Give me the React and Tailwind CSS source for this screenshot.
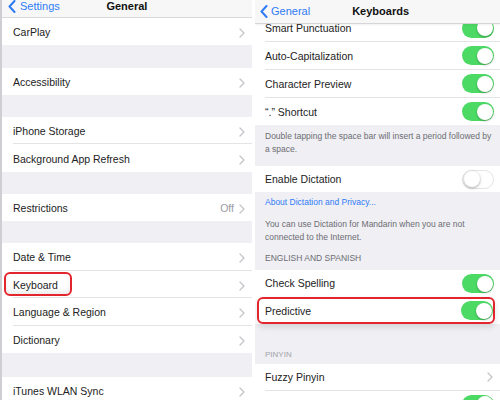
import { useState } from 'react';

const Chevron = () => (
    <svg width="6" height="10" viewBox="0 0 6 10" className="shrink-0">
        <path d="M1 1l4 4-4 4" stroke="#c4c4c9" strokeWidth="1.3" fill="none" strokeLinecap="round" strokeLinejoin="round" />
    </svg>
)

const BackArrow = () => (
    <svg width="8" height="13" viewBox="0 0 8 13" className="shrink-0">
        <path d="M6.5 1L1.5 6.5l5 5.5" stroke="#2f7cf6" strokeWidth="2" fill="none" strokeLinecap="round" strokeLinejoin="round" />
    </svg>
)

const Toggle = ({ on = true }) => (
    on ? (
        <div className="w-[32px] h-[19px] rounded-full bg-[#4cd964] flex items-center justify-end p-[1.5px] shrink-0">
            <div className="w-[16px] h-[16px] rounded-full bg-white shadow-[0_1px_2px_rgba(0,0,0,0.3)]" />
        </div>
    ) : (
        <div className="w-[32px] h-[19px] rounded-full bg-white border border-[#e3e3e8] flex items-center p-[0.5px] shrink-0">
            <div className="w-[16px] h-[16px] rounded-full bg-white shadow-[0_1px_3px_rgba(0,0,0,0.35)]" />
        </div>
    )
)

// left side row (General)
const NavRow = ({ label, value, line = true, h = 'h-[27px]' }) => (
    <div className={`${h} shrink-0 bg-white flex pl-[11px]`}>
        <div className={`flex-1 flex items-center justify-between pt-[3px] pr-[7px] ${line ? 'border-b border-[#e4e4e8]' : ''}`}>
            <span className="text-[10.5px] text-[#222]">{label}</span>
            <div className="flex items-center gap-[5px]">
                {value && <span className="text-[10.5px] text-[#9a9a9f]">{value}</span>}
                <Chevron />
            </div>
        </div>
    </div>
)

const Gap = ({ h }) => <div className={`${h} shrink-0 bg-[#efeff4]`} />

// right side row (Keyboards)
const SwitchRow = ({ label, on = true, line = true, h = 'h-[27px]' }) => (
    <div className={`${h} bg-white flex pl-[10px]`}>
        <div className={`flex-1 flex items-center justify-between pr-[6px] ${line ? 'border-b border-[#e4e4e8]' : ''}`}>
            <span className="text-[10.5px] text-[#222] pt-[2px]">{label}</span>
            <Toggle on={on} />
        </div>
    </div>
)

const GeneralPanel = () => (
    <div className="w-[252px] shrink-0 flex flex-col overflow-hidden border-l-[2px] border-[#cfcfd3] bg-[#efeff4]">
        <div className="h-[18px] shrink-0 bg-[#f7f7f7] border-b border-[#d9d9dd] overflow-hidden">
            <div className="h-[12px] flex items-center px-[6px]">
                <div className="flex items-center gap-[4px] text-[11px] text-[#2f7cf6]">
                    <BackArrow />
                    <span>Settings</span>
                </div>
                <span className="flex-1 text-center text-[11px] font-bold text-[#111] pr-[52px]">General</span>
            </div>
        </div>

        <NavRow label="CarPlay" line={false} />
        <Gap h="h-[23px]" />
        <NavRow label="Accessibility" line={false} />
        <Gap h="h-[22px]" />
        <NavRow label="iPhone Storage" />
        <NavRow label="Background App Refresh" line={false} h="h-[28px]" />
        <Gap h="h-[22px]" />
        <NavRow label="Restrictions" value="Off" line={false} />
        <Gap h="h-[22px]" />
        <NavRow label="Date & Time" h="h-[28px]" />

        {/* Keyboard, highlighted */}
        <div className="h-[27px] shrink-0 bg-white flex pl-[11px]">
            <div className="flex-1 flex items-center justify-between pr-[7px] border-b border-[#e4e4e8]">
                <span className="-ml-[9px] h-[24px] flex items-center pt-[4px] pl-[7px] pr-[12px] border-2 border-[#e3262d] rounded-[6px] shadow-[inset_0_-3px_5px_rgba(0,0,0,0.08)] text-[10.5px] text-[#222]">
                    Keyboard
                </span>
                <div className="pt-[3px]"><Chevron /></div>
            </div>
        </div>

        <NavRow label="Language & Region" h="h-[28px]" />
        <NavRow label="Dictionary" line={false} />
        <Gap h="h-[24px]" />
        <NavRow label="iTunes WLAN Sync" />
    </div>
)

const KeyboardsPanel = () => {
    const [predictive] = useState(true)

    return (
        <div className="flex-1 flex flex-col overflow-hidden bg-[#efeff4]">
            <div className="h-[24px] shrink-0 relative z-10 bg-[#f7f7f8] border-b border-[#d6d6da] shadow-[0_1px_2px_rgba(0,0,0,0.06)] flex items-center px-[5px]">
                <div className="flex items-center gap-[3px] text-[11px] text-[#2f7cf6]">
                    <BackArrow />
                    <span>General</span>
                </div>
                <span className="flex-1 text-center text-[11px] font-bold text-[#111] pr-[44px]">Keyboards</span>
            </div>

            <div className="-mt-[9px] flex flex-col shrink-0">
                <SwitchRow label="Smart Punctuation" />
                <SwitchRow label="Auto-Capitalization" h="h-[28px]" />
                <SwitchRow label="Character Preview" h="h-[28px]" />
                <SwitchRow label={'“.” Shortcut'} line={false} />

                <div className="h-[41px] pl-[10px] pr-[3px] pt-[5px] text-[8.5px] leading-[13px] text-[#6d6d72]">
                    Double tapping the space bar will insert a period followed by a space.
                </div>

                <SwitchRow label="Enable Dictation" on={false} line={false} h="h-[26px]" />

                <div className="h-[78px] pl-[10px] pr-[4px] flex flex-col text-[8.5px] leading-[13px]">
                    <span className="pt-[4px] text-[#2f7cf6]">About Dictation and Privacy...</span>
                    <span className="pt-[9px] text-[#6d6d72]">You can use Dictation for Mandarin when you are not connected to the Internet.</span>
                    <span className="pt-[8px] text-[#6d6d72] uppercase">English and Spanish</span>
                </div>

                <div className="h-[27px] bg-white flex pl-[10px]">
                    <div className="flex-1 flex items-center justify-between pr-[6px]">
                        <span className="text-[10.5px] text-[#222] pt-[1px]">Check Spelling</span>
                        <Toggle />
                    </div>
                </div>

                <div className="h-[27px] bg-white">
                    <div className="h-full ml-[2px] mr-[5px] flex items-center justify-between pl-[6px] border-2 border-[#e3262d] rounded-[6px] shadow-[0_3px_6px_rgba(0,0,0,0.12)]">
                        <span className="text-[10.5px] text-[#222] pt-[2px]">Predictive</span>
                        <Toggle on={predictive} />
                    </div>
                </div>

                <div className="h-[40px] pl-[10px] flex items-end pb-[3px] text-[8px] text-[#a3a3a8]">PINYIN</div>

                <div className="h-[27px] bg-white flex pl-[10px]">
                    <div className="flex-1 flex items-center justify-between pr-[7px] border-b border-[#e4e4e8]">
                        <span className="text-[10.5px] text-[#222] pt-[2px]">Fuzzy Pinyin</span>
                        <Chevron />
                    </div>
                </div>
                <SwitchRow label="" />
            </div>
        </div>
    )
}

export default function App() {
    return (
        <div className="w-[500px] h-[400px] overflow-hidden bg-white flex gap-[3px] font-['Liberation_Sans',Arial,sans-serif]">
            <GeneralPanel />
            <KeyboardsPanel />
        </div>
    )
}
